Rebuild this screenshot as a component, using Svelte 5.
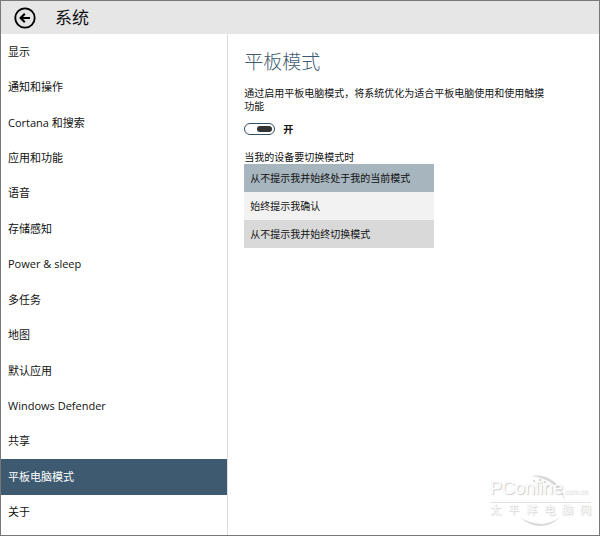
<script>
  const pages = [
    '显示',
    '通知和操作',
    'Cortana 和搜索',
    '应用和功能',
    '语音',
    '存储感知',
    'Power & sleep',
    '多任务',
    '地图',
    '默认应用',
    'Windows Defender',
    '共享',
    '平板电脑模式',
    '关于'
  ]

  const options = [
    '从不提示我并始终处于我的当前模式',
    '始终提示我确认',
    '从不提示我并始终切换模式'
  ]

  let current = $state('平板电脑模式')
  let tabletMode = $state(true)
  let selected = $state(0)
</script>

<div class="window">
  <header>
    <button class="back" aria-label="返回">
      <svg width="22" height="22" viewBox="0 0 22 22" fill="none" stroke="#000">
        <circle cx="11" cy="11" r="9.7" stroke-width="1.8" />
        <path d="M16 11H7M10.8 6.8L6.6 11L10.8 15.2" stroke-width="2.1" />
      </svg>
    </button>
    <h1>系统</h1>
  </header>

  <div class="body">
    <nav>
      {#each pages as page}
        <button class="page" class:active={page === current} onclick={() => current = page}>{page}</button>
      {/each}
    </nav>

    <main>
      <h2>平板模式</h2>
      <p class="description">通过启用平板电脑模式，将系统优化为适合平板电脑使用和使用触摸功能</p>

      <label class="toggle">
        <input type="checkbox" role="switch" bind:checked={tabletMode} />
        <span>{tabletMode ? '开' : '关'}</span>
      </label>

      <p class="caption" id="switch-label">当我的设备要切换模式时</p>
      <div class="options" role="listbox" aria-labelledby="switch-label">
        {#each options as option, i}
          <button role="option" aria-selected={selected === i} onclick={() => selected = i}>{option}</button>
        {/each}
      </div>
    </main>
  </div>

  <div class="watermark">
    <svg class="ring" width="56" height="56" viewBox="0 0 56 56" fill="none">
      <g fill="#d9d9d9">
        <path d="M17 4C33 1 48 11 51 29C45 14 34 6 17 4Z" />
        <path d="M6 45C18 57 35 57 46 45C35 54 19 54 6 45Z" />
        <circle cx="20" cy="9" r="1.2" />
        <circle cx="26" cy="8" r="1.3" />
        <circle cx="31" cy="10" r="1.3" />
        <circle cx="27" cy="12" r="1" />
        <circle cx="34" cy="14" r="1.5" />
      </g>
    </svg>
    <div class="brand"><span>PConline</span><small>.com.cn</small></div>
    <div class="slogan">
      {#each '太平洋电脑网' as char}<span>{char}</span>{/each}
    </div>
  </div>
</div>

<style>
  :global(body) { background: #fff; }

  .window {
    position: relative;
    box-sizing: border-box;
    min-height: 100vh;
    display: flex;
    flex-direction: column;
    border: 1px solid #777;
    font-family: "Open Sans", "Noto Sans CJK SC", sans-serif;
    font-size: 11px;
    color: #111;
  }

  button {
    border: none;
    background: none;
    font: inherit;
    color: inherit;
    text-align: left;
    cursor: pointer;
  }

  header {
    display: flex;
    align-items: center;
    gap: 19px;
    height: 33px;
    padding-left: 13px;
    background: #e6e6e6;
  }

  .back { display: flex; padding: 0; }

  h1 {
    margin: 0;
    font-size: 17px;
    font-weight: 400;
    line-height: 24px;
  }

  .body { flex: 1; display: flex; }

  nav {
    box-sizing: border-box;
    width: 38%;
    display: grid;
    grid-auto-rows: 1fr;
    padding-bottom: 5px;
    border-right: 1px solid #ddd;
  }

  .page { padding: 0 7px; line-height: 16px; }
  .page.active { background: #3d5a70; color: #fff; }

  main { flex: 1; padding: 15px 40px 16px 16px; font-size: 10px; }

  h2 {
    margin: 0 0 12px;
    font-size: 19px;
    font-weight: 300;
    line-height: 26px;
    color: #3d5a70;
  }

  p { margin: 0; line-height: 13px; }
  .description { max-width: 308px; }

  .toggle {
    display: flex;
    align-items: center;
    gap: 8px;
    margin: 8px 0 14px;
    line-height: 16px;
    font-weight: 700;
  }

  .toggle input {
    appearance: none;
    display: flex;
    align-items: center;
    box-sizing: border-box;
    width: 31px;
    height: 12px;
    margin: 0;
    padding: 0 2px;
    border: 1px solid #2f5068;
    border-radius: 6px;
    background: #fff;
  }

  .toggle input::before {
    content: '';
    width: 15px;
    height: 6px;
    border-radius: 3px;
    background: #333;
  }

  .toggle input:checked { justify-content: flex-end; }

  .options {
    display: flex;
    flex-direction: column;
    width: 190px;
  }

  .options button { padding: 6px; line-height: 16px; background: #f2f2f2; }
  .options button:last-child { background: #d9d9d9; }
  .options button[aria-selected='true'] { background: #a7b5be; }

  /* white lettering, visible only by its shadow */
  .watermark {
    position: absolute;
    right: 8px;
    bottom: 10px;
    width: 101px;
    color: #fff;
    text-shadow: 1px 1px 1px #ccc, 0 0 1px #ddd;
    pointer-events: none;
  }

  .ring { position: absolute; left: 24px; bottom: -3px; }

  .brand {
    position: relative;
    display: flex;
    align-items: baseline;
    border-bottom: 1px solid #e2e2e2;
    font-family: "Liberation Sans", sans-serif;
    font-size: 18px;
    font-weight: 400;
    line-height: 20px;
  }

  .brand small { font-size: 7px; }

  .slogan {
    position: relative;
    display: flex;
    justify-content: space-between;
    padding-bottom: 8px;
    font-size: 11px;
    font-weight: 400;
    line-height: 14px;
  }
</style>
